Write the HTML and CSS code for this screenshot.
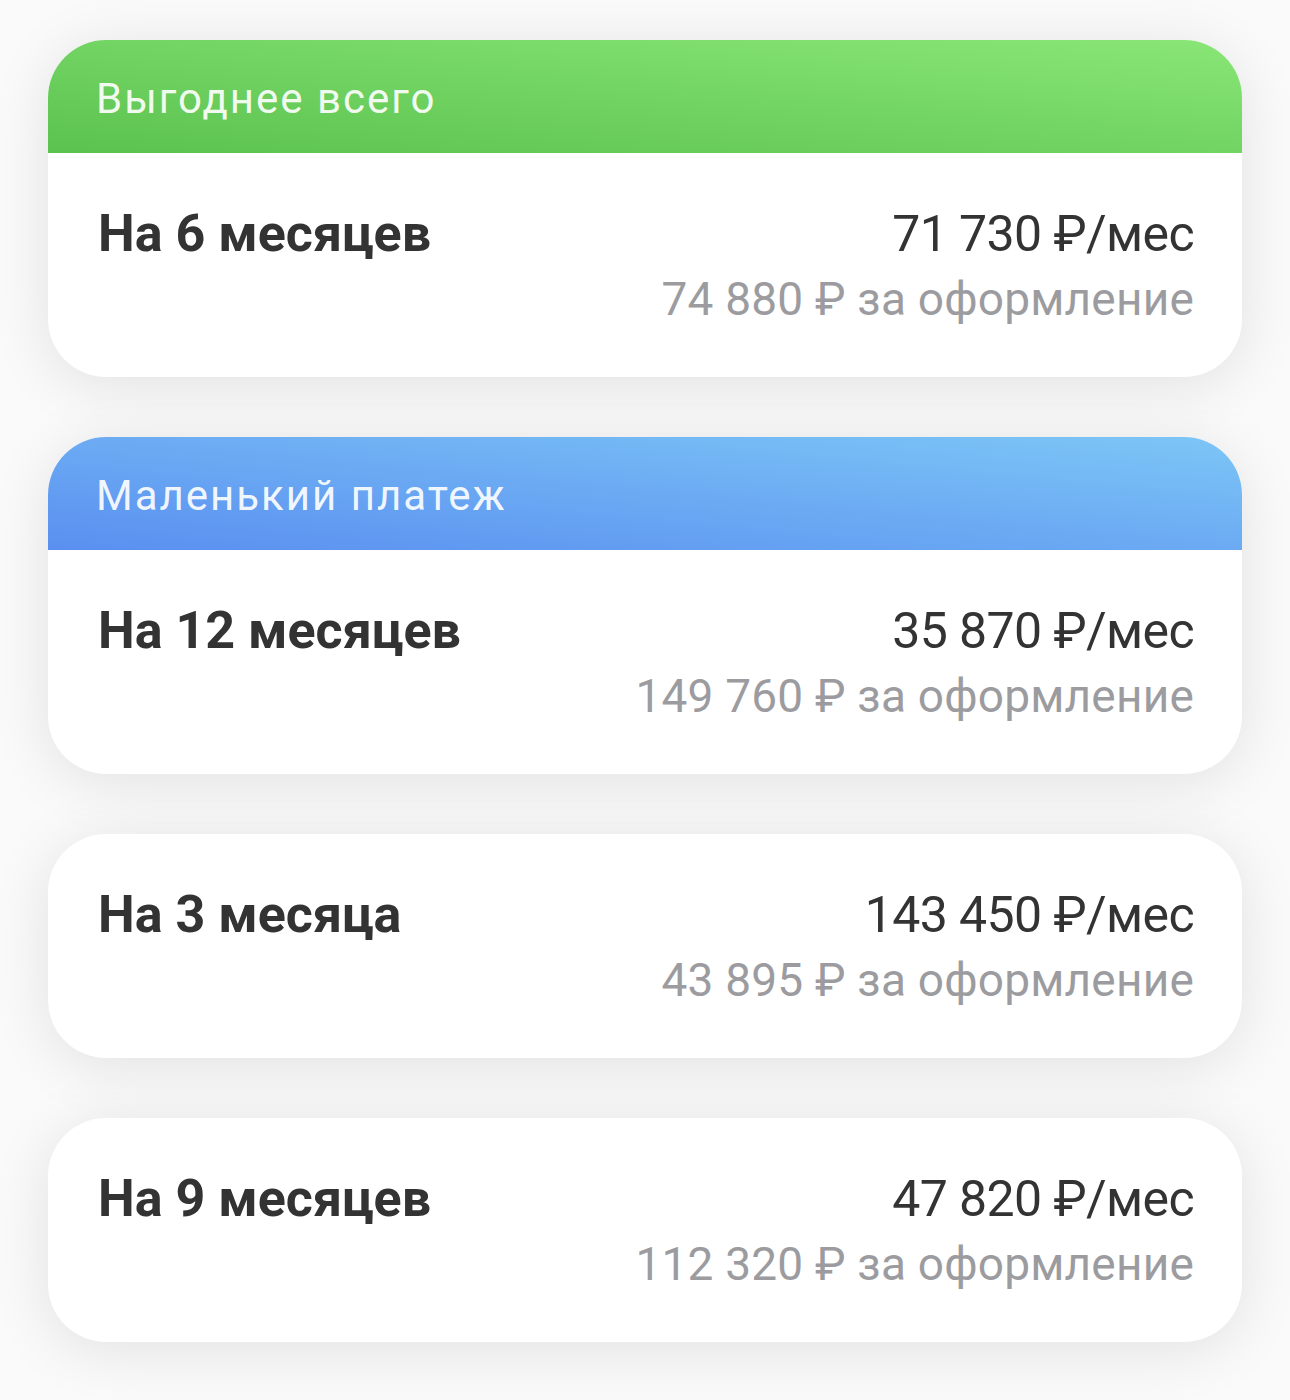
FILE: index.html
```html
<!DOCTYPE html>
<html lang="ru">
<head>
  <meta charset="UTF-8">
  <title>Рассрочка</title>
  <link rel="stylesheet" href="styles.css">
</head>
<body>

<div class="plans">

  <div class="plan">
    <div class="plan-badge green">Выгоднее всего</div>
    <div class="plan-body">
      <div class="plan-term">На 6 месяцев</div>
      <div class="plan-prices">
        <div class="plan-month">71 730 ₽/мес</div>
        <div class="plan-fee">74 880 ₽ за оформление</div>
      </div>
    </div>
  </div>

  <div class="plan">
    <div class="plan-badge blue">Маленький платеж</div>
    <div class="plan-body">
      <div class="plan-term">На 12 месяцев</div>
      <div class="plan-prices">
        <div class="plan-month">35 870 ₽/мес</div>
        <div class="plan-fee">149 760 ₽ за оформление</div>
      </div>
    </div>
  </div>

  <div class="plan">
    <div class="plan-body">
      <div class="plan-term">На 3 месяца</div>
      <div class="plan-prices">
        <div class="plan-month">143 450 ₽/мес</div>
        <div class="plan-fee">43 895 ₽ за оформление</div>
      </div>
    </div>
  </div>

  <div class="plan">
    <div class="plan-body">
      <div class="plan-term">На 9 месяцев</div>
      <div class="plan-prices">
        <div class="plan-month">47 820 ₽/мес</div>
        <div class="plan-fee">112 320 ₽ за оформление</div>
      </div>
    </div>
  </div>

</div>

</body>
</html>
```

FILE: styles.css
```css
body {
  font-family: Roboto, 'Noto Sans', sans-serif;
  background-color: #fafafa;
  color: #333;
  margin: 0;
}
.plans {
  display: flex;
  flex-direction: column;
  gap: 60px;
  padding: 40px 48px 60px;
}
.plan {
  background-color: #fff;
  border-radius: 58px;
  overflow: hidden;
  box-shadow: 0 8px 60px rgba(0,0,0,0.1);
}
.plan-badge {
  height: 113px;
  box-sizing: border-box;
  padding-top: 3px;
  display: flex;
  align-items: center;
  padding-left: 48px;
  font-size: 42px;
  letter-spacing: 2px;
  color: rgba(255,255,255,0.92);
}
.plan-badge.green {
  background: linear-gradient(to top right, #5bc24f, #89e677);
}
.plan-badge.blue {
  background: linear-gradient(to top right, #5a8ff0, #7dc6f6);
}
.plan-body {
  display: flex;
  justify-content: space-between;
  align-items: flex-start;
  padding: 50px 48px 50px 50px;
}
.plan-term {
  font-size: 52px;
  font-weight: 700;
  line-height: 62px;
  color: #333;
}
.plan-prices {
  text-align: right;
}
.plan-month {
  font-size: 50px;
  line-height: 62px;
  letter-spacing: -0.6px;
  color: #333;
}
.plan-fee {
  margin-top: 6px;
  font-size: 46px;
  line-height: 56px;
  letter-spacing: 0.2px;
  color: #9c9ca0;
}
```
